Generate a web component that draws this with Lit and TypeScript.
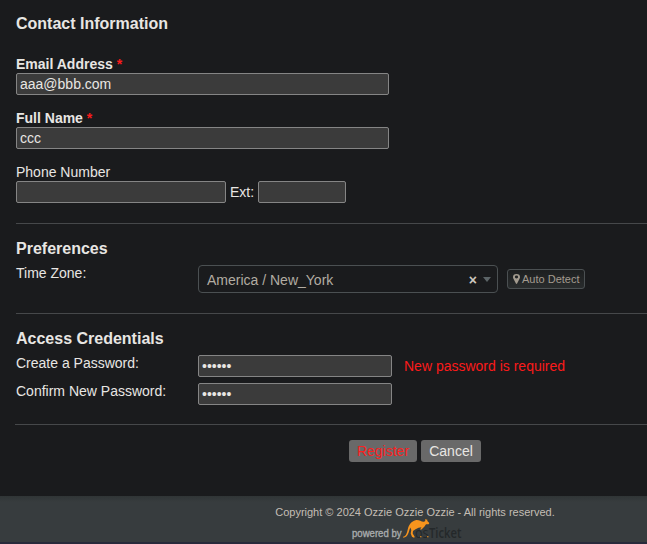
import { LitElement, html, css } from "lit";
import { customElement } from "lit/decorators.js";

@customElement("app-root")
export class AppRoot extends LitElement {
  static styles = css`
    :host {
      display: flex;
      flex-direction: column;
      height: 544px;
      overflow: hidden;
      background: #1a1b1d;
      color: #e8e6e3;
      font: 14px/16px "Liberation Sans", Arial, sans-serif;
    }
    * { box-sizing: border-box; }
    main { height: 496px; padding: 14px 0 0 16px; flex: none; }
    h3 { margin: 0; font-size: 16px; line-height: 20px; font-weight: bold; }
    .contact { height: 42px; }
    .field { height: 54px; }
    .field.phone { height: 59px; }
    .label { height: 17px; }
    .bold { font-weight: bold; }
    .red { color: #fb1a1a; }
    input {
      display: block;
      height: 22px;
      margin: 0;
      padding: 1px 3px;
      border: 1px solid #858585;
      border-radius: 2px;
      background: #3b3b3b;
      color: #e8e6e3;
      font: 14px "Liberation Sans", Arial, sans-serif;
      outline: none;
    }
    .wide { width: 373px; }
    .tel { width: 210px; }
    .ext { width: 88px; }
    .pass { width: 194px; }
    .line { display: flex; align-items: center; gap: 4px; }
    .line span { width: 24px; white-space: nowrap; }
    hr { margin: 0; border: 0; height: 1px; background: #46484a; }
    .prefs { height: 89px; padding-top: 15px; }
    .creds { height: 110px; padding-top: 15px; }
    .row { display: flex; height: 28px; align-items: flex-start; }
    .row .name { width: 182px; flex: none; }
    .creds .control { padding-top: 1px; }
    .prefs .row { margin-top: 6px; }
    .creds .row:nth-of-type(1) { margin-top: 5px; }
    .creds .name { padding-top: 1px; }
    .select {
      width: 300px;
      height: 28px;
      border: 1px solid #4b5052;
      border-radius: 4px;
      padding: 0 6px 0 8px;
      display: flex;
      align-items: center;
      color: #b2aca2;
    }
    .select .value { flex: 1; padding-top: 2px; }
    .select b { color: #ccc7bf; margin-right: 6px; padding-top: 2px; }
    .arrow { border: 4px solid transparent; border-top: 5px solid #5c6467; border-bottom: 0; }
    .detect {
      width: 78px;
      height: 20px;
      margin: 4px 0 0 9px;
      padding: 0 5px;
      border: 1px solid #4b5052;
      border-radius: 3px;
      background: linear-gradient(#1d1f20, #292c2d);
      display: flex;
      align-items: center;
      gap: 2px;
      color: #a39b8f;
      font-size: 11px;
      line-height: 18px;
      white-space: nowrap;
    }
    .detect svg { width: 7px; height: 10px; flex: none; }
    .error { margin: 4px 0 0 12px; }
    .last { margin-left: -1px; }
    .actions { display: flex; gap: 4px; padding: 15px 0 0 333px; }
    button {
      height: 22px;
      padding: 0;
      border: 0;
      border-radius: 3px;
      background: #696969;
      color: #e8e6e3;
      font: 14px/22px "Liberation Sans", Arial, sans-serif;
    }
    .register { width: 68px; color: #fb2020; }
    .cancel { width: 60px; }
    footer {
      flex: 1;
      border-bottom: 2px solid #282a3b;
      background: linear-gradient(#303536, #373c3e 6px);
      padding: 9px 0 0 183px;
      color: #c4beb5;
      font-size: 11px;
      line-height: 14px;
      text-align: center;
      position: relative;
    }
    .brand { position: absolute; left: 351px; top: 22px; width: 114px; height: 26px; overflow: visible; }
    .powered { font: 10.5px "Liberation Sans", sans-serif; fill: #a9acad; stroke: #a9acad; stroke-width: .35px; }
    .wordmark { font: 600 14px "Open Sans", sans-serif; fill: #24282a; }
    .wordmark.os { font-weight: 400; }
  `;

  render() {
    return html`
      <main>
        <h3 class="contact">Contact Information</h3>
        <div class="field">
          <div class="label bold">Email Address <span class="red">*</span></div>
          <input class="wide" .value=${"aaa@bbb.com"} />
        </div>
        <div class="field">
          <div class="label bold">Full Name <span class="red">*</span></div>
          <input class="wide" .value=${"ccc"} />
        </div>
        <div class="field phone">
          <div class="label">Phone Number</div>
          <div class="line"><input class="tel" /><span>Ext:</span><input class="ext" /></div>
        </div>
        <hr />
        <section class="prefs">
          <h3>Preferences</h3>
          <div class="row">
            <div class="name">Time Zone:</div>
            <div class="select"><span class="value">America / New_York</span><b>×</b><i class="arrow"></i></div>
            <div class="detect">
              <svg viewBox="0 0 6 10" preserveAspectRatio="none"><path fill="#a39b8f" fill-rule="evenodd" d="M3 0a3 3 0 0 1 3 3c0 1-.3 1.500-.6 2.200L3.500 9.500q-.5.800-1 0L.6 5.200C.3 4.500 0 4 0 3a3 3 0 0 1 3-3Zm0 1.600a1.400 1.400 0 1 0 0 2.800 1.400 1.400 0 0 0 0-2.800Z"/></svg>
              <span>Auto Detect</span>
            </div>
          </div>
        </section>
        <hr />
        <section class="creds">
          <h3>Access Credentials</h3>
          <div class="row">
            <div class="name">Create a Password:</div>
            <div class="control"><input class="pass" type="password" .value=${"secret"} /></div>
            <div class="error red">New password is required</div>
          </div>
          <div class="row">
            <div class="name">Confirm New Password:</div>
            <div class="control"><input class="pass" type="password" .value=${"secret"} /></div>
          </div>
        </section>
        <hr class="last" />
        <div class="actions">
          <button class="register">Register</button>
          <button class="cancel">Cancel</button>
        </div>
      </main>
      <footer>
        Copyright © 2024 Ozzie Ozzie Ozzie - All rights reserved.
        <svg class="brand" viewBox="0 0 114 26">
          <text class="powered" x="1" y="19" textLength="49.500" lengthAdjust="spacingAndGlyphs">powered by</text>
          <text class="wordmark os" x="64" y="19.700" textLength="13.500" lengthAdjust="spacingAndGlyphs">os</text>
          <text class="wordmark" x="78" y="19.700" textLength="32.500" lengthAdjust="spacingAndGlyphs">Ticket</text>
          <path fill="#f7941d" d="M52 18.700C55.500 18.500 56 14 57 10.500C58 6.500 60.500 3.200 64.500 2.200C68 1.400 70.500 4.200 73 3.700L74.300 3L73.900 .8L75.200 2L76 .8L76.400 3L78.300 5L77.700 6.200L75 6.300L73.500 8.500L70.500 11.600L69 11.600L70.500 9.300L67.500 9.800L64.500 11.200L62 13L61.700 15.500L63.800 19L63 19.700L61 18.700L59.700 15.500L60.300 12L59.300 9.500C57.700 13 57.500 19.500 52.300 19.700Z"/>
          <path fill="#f7941d" d="M69 18.300h1.500v1H69zM76 18.300h1.500v1H76z"/>
        </svg>
      </footer>
    `;
  }
}
